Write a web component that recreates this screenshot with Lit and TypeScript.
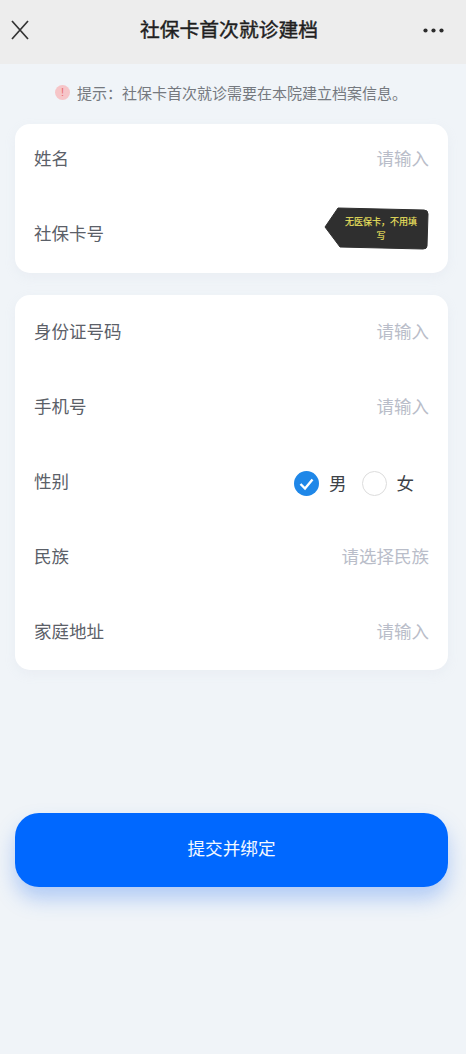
import { LitElement, html, css } from "lit";
import { customElement } from "lit/decorators.js";

@customElement("app-root")
export class AppRoot extends LitElement {
  static styles = css`
    :host {
      display: block;
      width: 466px;
      height: 1054px;
      background: #f0f4f8;
      font-family: "Liberation Sans", "Noto Sans CJK SC", sans-serif;
      overflow: hidden;
    }
    .nav {
      height: 64px;
      background: #ededed;
      display: flex;
      align-items: center;
      justify-content: space-between;
      padding: 0 22px 4px 11px;
      box-sizing: border-box;
    }
    .nav svg { display: block; }
    .title {
      margin-left: 6px;
      font-size: 19.8px;
      line-height: 30px;
      font-weight: 400;
      color: #1f1f1f;
      -webkit-text-stroke: 0.45px #1f1f1f;
    }
    .notice {
      height: 60px;
      display: flex;
      align-items: center;
      justify-content: center;
      gap: 7px;
      font-size: 15px;
      color: #75797f;
      padding: 0 4px 4px 0;
      box-sizing: border-box;
    }
    .alert {
      width: 15px;
      height: 15px;
      border-radius: 50%;
      background: #f6c5c8;
      color: #e8696f;
      font-size: 11px;
      line-height: 15px;
      text-align: center;
      flex: none;
    }
    .card {
      position: relative;
      margin: 0 18px 22px 15px;
      background: #fff;
      border-radius: 15px;
      display: flex;
      flex-direction: column;
      gap: 45px;
      box-shadow: 0 4px 12px rgba(190, 200, 215, 0.12);
    }
    .card.a { padding: 20px 19px 24px; }
    .card.b { padding: 22px 19px 23px; }
    .row {
      height: 30px;
      display: flex;
      align-items: center;
      justify-content: space-between;
      font-size: 17.5px;
      color: #5b6068;
    }
    .row > span { padding-bottom: 3px; }
    .ph { color: #b9bdc9; }
    .tip {
      position: absolute;
      left: 309px;
      top: 83px;
      width: 106px;
      height: 44px;
    }
    .tip svg { position: absolute; inset: 0; display: block; }
    .tip-text {
      position: absolute;
      left: 19px;
      top: 8px;
      width: 76px;
      font-size: 9px;
      line-height: 14px;
      font-weight: 400;
      text-align: center;
      color: #ece25f;
      -webkit-text-stroke: 0.15px #ece25f;
    }
    .gender {
      display: flex;
      align-items: center;
      margin: 2px 15px 0 0;
      color: #3d4147;
      font-size: 17.5px;
    }
    .gender span { padding-bottom: 2px; }
    .radio {
      width: 25px;
      height: 25px;
      flex: none;
      display: block;
    }
    .opt-l { margin: 0 15px 0 10px; }
    .opt-r { margin-left: 10px; }
    .spacer { height: 121px; }
    .submit {
      margin: 0 18px 0 15px;
      height: 74px;
      border-radius: 24px;
      background: #0068ff;
      color: #f4f8ff;
      font-size: 17.6px;
      display: flex;
      align-items: center;
      justify-content: center;
      padding-bottom: 5px;
      box-sizing: border-box;
      box-shadow: 0 12px 20px rgba(60, 125, 240, 0.34);
    }
  `;

  render() {
    return html`
      <div class="nav">
        <svg width="18" height="20" viewBox="0 0 18 20" fill="none" stroke="#333" stroke-width="1.7">
          <path d="M1 1 L17 19 M17 1 L1 19" />
        </svg>
        <div class="title">社保卡首次就诊建档</div>
        <svg width="21" height="5" viewBox="0 0 21 5" fill="#2c2c2c">
          <circle cx="2.5" cy="2.5" r="2.1" /><circle cx="10.5" cy="2.5" r="2.1" /><circle cx="18.5" cy="2.5" r="2.1" />
        </svg>
      </div>
      <div class="notice"><span class="alert">!</span><span>提示：社保卡首次就诊需要在本院建立档案信息。</span></div>
      <div class="card a">
        <div class="row"><span>姓名</span><span class="ph">请输入</span></div>
        <div class="row"><span>社保卡号</span></div>
        <div class="tip">
          <svg width="106" height="44" viewBox="0 0 106 44">
            <path d="M14 1 L100 3 Q104 3 104 7 L103 39 Q103 42 99 42 L16 40 L1 20 Z" fill="#2f2f2f" stroke="#2f2f2f" stroke-linejoin="round" />
          </svg>
          <div class="tip-text">无医保卡，不用填写</div>
        </div>
      </div>
      <div class="card b">
        <div class="row"><span>身份证号码</span><span class="ph">请输入</span></div>
        <div class="row"><span>手机号</span><span class="ph">请输入</span></div>
        <div class="row">
          <span>性别</span>
          <div class="gender">
            <svg class="radio" viewBox="0 0 25 25">
              <circle cx="12.5" cy="12.5" r="12.5" fill="#1f87e8" />
              <path d="M6.5 13 L11 17.5 L18.5 8.5" fill="none" stroke="#fff" stroke-width="2.4" />
            </svg>
            <span class="opt-l">男</span>
            <svg class="radio" viewBox="0 0 25 25">
              <circle cx="12.5" cy="12.5" r="12" fill="#fff" stroke="#dcdcdc" />
            </svg>
            <span class="opt-r">女</span>
          </div>
        </div>
        <div class="row"><span>民族</span><span class="ph">请选择民族</span></div>
        <div class="row"><span>家庭地址</span><span class="ph">请输入</span></div>
      </div>
      <div class="spacer"></div>
      <div class="submit">提交并绑定</div>
    `;
  }
}
